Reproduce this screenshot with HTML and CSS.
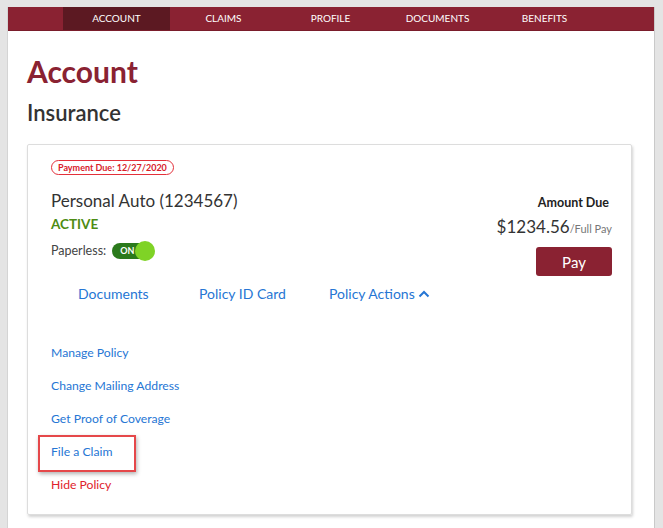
FILE: index.html
```html
<!DOCTYPE html>
<html lang="en">
<head>
<meta charset="utf-8">
<title>Account</title>
<link rel="stylesheet" href="styles.css">
</head>
<body>
<div class="page">
  <nav class="nav">
    <a class="tab active">ACCOUNT</a>
    <a class="tab">CLAIMS</a>
    <a class="tab">PROFILE</a>
    <a class="tab">DOCUMENTS</a>
    <a class="tab">BENEFITS</a>
  </nav>
  <main class="content">
    <h1 class="title">Account</h1>
    <h2 class="subtitle">Insurance</h2>
    <section class="card">
      <span class="badge">Payment Due: 12/27/2020</span>
      <div class="policy-row">
        <div class="policy-info">
          <div class="policy-name">Personal Auto (1234567)</div>
          <div class="status">ACTIVE</div>
          <div class="paperless">
            <span class="paperless-label">Paperless:</span>
            <span class="toggle"><span class="toggle-text">ON</span><span class="knob"></span></span>
          </div>
        </div>
        <div class="amount">
          <div class="amount-label">Amount Due</div>
          <div class="amount-value">$1234.56<span class="amount-note">/Full Pay</span></div>
          <button class="pay">Pay</button>
        </div>
      </div>
      <div class="links">
        <a class="link">Documents</a>
        <a class="link">Policy ID Card</a>
        <a class="link">Policy Actions <svg class="chev" width="12" height="8" viewBox="0 0 12 8"><path d="M1.5 6.5 L6 2 L10.5 6.5" fill="none" stroke="#2676d4" stroke-width="2"/></svg></a>
      </div>
      <ul class="actions">
        <li class="action">Manage Policy</li>
        <li class="action">Change Mailing Address</li>
        <li class="action">Get Proof of Coverage</li>
        <li class="action highlighted">File a Claim</li>
        <li class="action danger">Hide Policy</li>
      </ul>
    </section>
  </main>
</div>
</body>
</html>
```

FILE: styles.css
```css
* { box-sizing: border-box; }
html, body { margin: 0; padding: 0; }
body {
  background: #e4e4e4;
  font-family: Lato, "Open Sans", Arial, sans-serif;
  color: #333;
}
.page {
  margin: 7px 9px 0 8px;
  background: #fff;
  min-height: 540px;
  box-shadow: 1px 0 0 #c9c9c9, -1px 0 0 #d4d4d4;
}
.nav {
  display: flex;
  height: 24px;
  background: #8a2232;
  padding-left: 55px;
  border-bottom: 1px solid #7a1d2b;
}
.tab {
  width: 107px;
  text-align: center;
  color: #fff;
  font-size: 10px;
  line-height: 23px;
}
.tab.active { background: #5c1922; }
.content {
  padding: 0 22px 0 19px;
}
.title {
  margin: 22px 0 0;
  font-size: 30px;
  line-height: 36px;
  font-weight: 700;
  color: #8a2232;
}
.subtitle {
  margin: 11px 0 0;
  font-size: 22px;
  line-height: 26px;
  font-weight: 600;
  color: #333;
}
.card {
  margin-top: 18px;
  border: 1px solid #ddd;
  box-shadow: 1px 2px 3px rgba(0,0,0,0.18);
  border-radius: 2px;
  padding: 15px 19px 21px 23px;
}
.badge {
  display: block;
  width: max-content;
  height: 15px;
  border: 1px solid #e3303a;
  border-radius: 8px;
  padding: 0 6px;
  font-size: 9px;
  line-height: 13px;
  font-weight: 700;
  color: #d8202a;
}
.policy-row {
  display: flex;
  justify-content: space-between;
  margin-top: 15px;
}
.policy-name {
  font-size: 17px;
  line-height: 22px;
  color: #333;
}
.status {
  margin-top: 4px;
  font-size: 13.5px;
  line-height: 17px;
  font-weight: 700;
  color: #4d8c14;
}
.paperless {
  margin-top: 7px;
  display: flex;
  align-items: center;
  height: 21px;
}
.paperless-label {
  font-size: 12.5px;
  color: #444;
}
.toggle {
  position: relative;
  margin-left: 6px;
  width: 42px;
  height: 16px;
  border-radius: 8px;
  background: #2b7a1c;
}
.toggle-text {
  position: absolute;
  left: 8px;
  top: 0;
  font-size: 9px;
  line-height: 16px;
  font-weight: 700;
  color: #fff;
}
.knob {
  position: absolute;
  right: -1px;
  top: -2px;
  width: 20px;
  height: 20px;
  border-radius: 50%;
  background: #7fd326;
}
.amount {
  display: flex;
  flex-direction: column;
  align-items: flex-end;
}
.amount-label {
  margin-top: 5px;
  font-size: 12.5px;
  line-height: 16px;
  font-weight: 700;
  color: #222;
  margin-right: 3px;
}
.amount-value {
  margin-top: 5px;
  font-size: 17px;
  line-height: 22px;
  color: #333;
}
.amount-note {
  font-size: 11px;
  color: #777;
}
.pay {
  margin-top: 7px;
  width: 76px;
  height: 29px;
  border: none;
  border-radius: 3px;
  background: #8a2232;
  color: #fff;
  font-family: inherit;
  font-size: 15px;
}
.links {
  display: grid;
  grid-template-columns: 121px 130px auto;
  padding-left: 27px;
  margin-top: 9px;
}
.link {
  font-size: 14px;
  line-height: 18px;
  color: #2676d4;
  white-space: nowrap;
}
.chev { vertical-align: 1px; margin-left: 0; }
.actions {
  list-style: none;
  margin: 42px 0 0;
  padding: 0;
}
.action {
  font-size: 12.2px;
  line-height: 16px;
  color: #2676d4;
  margin-bottom: 17px;
}
.action:last-child { margin-bottom: 0; }
.action.danger { color: #e0222c; }
.highlighted { position: relative; }
.highlighted::after {
  content: "";
  position: absolute;
  left: -13px;
  top: -9px;
  width: 94px;
  height: 33px;
  border: 2px solid #e5484a;
  box-shadow: 1px 2px 4px rgba(0,0,0,0.3);
}
```
